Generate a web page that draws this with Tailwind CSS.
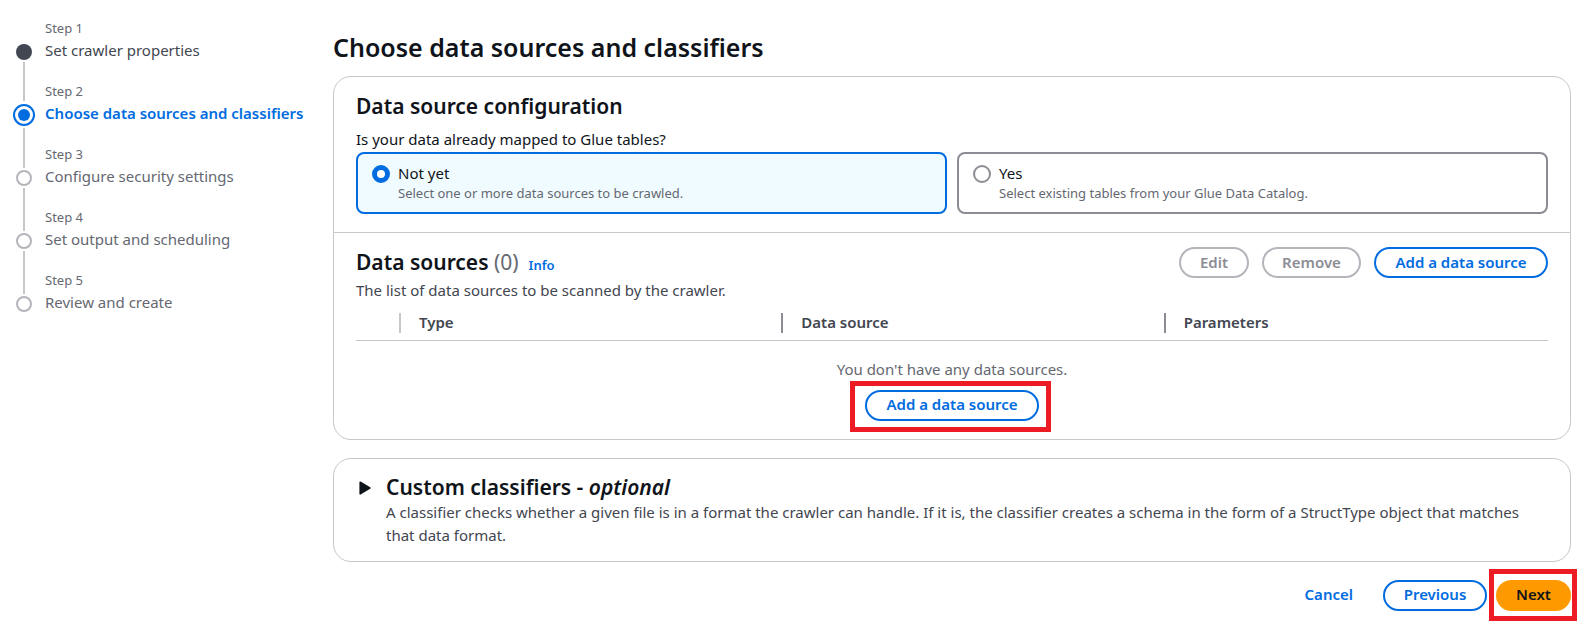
<!DOCTYPE html>
<html lang="en">
<head>
<meta charset="utf-8">
<meta name="viewport" content="width=device-width, initial-scale=1">
<title>Choose data sources and classifiers</title>
<script src="https://cdn.jsdelivr.net/npm/@tailwindcss/browser@4"></script>
</head>
<body class="flex bg-white font-['Noto_Sans','Open_Sans',sans-serif] text-[15px] leading-[22px] text-[#0f141a]">
  <nav aria-label="Steps" class="w-[333px] shrink-0 pt-[17px] pl-[11px]">
    <ol>
      <li class="flex h-[63px] gap-2">
        <span class="flex w-[26px] shrink-0 flex-col items-center pt-[27px]">
          <span class="size-4 shrink-0 rounded-full bg-[#424650]"></span>
          <span class="mt-[2px] h-[39px] w-[2px] shrink-0 bg-[#c6c6cd]"></span>
        </span>
        <span class="flex flex-col"><span class="text-[13px] text-[#656871]">Step 1</span><a href="#" class="text-[#424650]">Set crawler properties</a></span>
      </li>
      <li class="flex h-[63px] gap-2">
        <span class="flex w-[26px] shrink-0 flex-col items-center pt-[24px]">
          <span class="flex size-[22px] shrink-0 items-center justify-center rounded-full border-2 border-[#006ce0]"><span class="size-3 rounded-full bg-[#006ce0]"></span></span>
          <span class="mt-[2px] h-[40px] w-[2px] shrink-0 bg-[#c6c6cd]"></span>
        </span>
        <span class="flex flex-col whitespace-nowrap"><span class="text-[13px] text-[#656871]">Step 2</span><span aria-current="step" class="font-semibold text-[#006ce0]">Choose data sources and classifiers</span></span>
      </li>
      <li class="flex h-[63px] gap-2">
        <span class="flex w-[26px] shrink-0 flex-col items-center pt-[27px]">
          <span class="size-4 shrink-0 rounded-full border-2 border-[#b4b4bb]"></span>
          <span class="mt-[2px] h-[43px] w-[2px] shrink-0 bg-[#c6c6cd]"></span>
        </span>
        <span class="flex flex-col text-[#656871]"><span class="text-[13px]">Step 3</span><span>Configure security settings</span></span>
      </li>
      <li class="flex h-[63px] gap-2">
        <span class="flex w-[26px] shrink-0 flex-col items-center pt-[27px]">
          <span class="size-4 shrink-0 rounded-full border-2 border-[#b4b4bb]"></span>
          <span class="mt-[2px] h-[43px] w-[2px] shrink-0 bg-[#c6c6cd]"></span>
        </span>
        <span class="flex flex-col text-[#656871]"><span class="text-[13px]">Step 4</span><span>Set output and scheduling</span></span>
      </li>
      <li class="flex h-[63px] gap-2">
        <span class="flex w-[26px] shrink-0 flex-col items-center pt-[27px]">
          <span class="size-4 shrink-0 rounded-full border-2 border-[#b4b4bb]"></span>
        </span>
        <span class="flex flex-col text-[#656871]"><span class="text-[13px]">Step 5</span><span>Review and create</span></span>
      </li>
    </ol>
  </nav>

  <main class="min-w-0 grow pt-[31px] pr-[7px] pb-[14px]">
    <h1 class="text-[25px] leading-[32px] font-semibold">Choose data sources and classifiers</h1>

    <section class="mt-[13px] rounded-[18px] border border-[#c6c6cd]">
      <div class="border-b border-[#c6c6cd] px-[22px] pt-4 pb-[18px]">
        <h2 class="text-[21px] leading-[26px] font-semibold">Data source configuration</h2>
        <fieldset class="mt-[9px]">
          <legend>Is your data already mapped to Glue tables?</legend>
          <div class="mt-[2px] grid grid-cols-2 gap-[10px]">
            <label class="flex gap-2 rounded-lg border-2 border-[#006ce0] bg-[#f0fbff] px-[14px] pt-2 pb-[10px]">
              <input type="radio" name="mapped" checked class="mt-[3px] size-[18px] shrink-0 appearance-none rounded-full border-[#8c8c94] bg-white not-checked:border-2 checked:border-[5px] checked:border-[#006ce0]">
              <span class="flex flex-col"><span>Not yet</span><span class="text-[13px] leading-[18px] text-[#656871]">Select one or more data sources to be crawled.</span></span>
            </label>
            <label class="flex gap-2 rounded-lg border-2 border-[#8c8c94] bg-white px-[14px] pt-2 pb-[10px]">
              <input type="radio" name="mapped" class="mt-[3px] size-[18px] shrink-0 appearance-none rounded-full border-[#8c8c94] bg-white not-checked:border-2 checked:border-[5px] checked:border-[#006ce0]">
              <span class="flex flex-col"><span>Yes</span><span class="text-[13px] leading-[18px] text-[#656871]">Select existing tables from your Glue Data Catalog.</span></span>
            </label>
          </div>
        </fieldset>
      </div>

      <div class="px-[22px] pt-[14px] pb-[18px]">
        <div class="flex items-start justify-between">
          <div>
            <div class="flex h-8 items-baseline gap-[10px]">
              <h2 class="text-[21px] leading-[30px] font-semibold">Data sources <span class="font-normal text-[#656871]">(0)</span></h2>
              <a href="#" class="text-[13px] font-semibold text-[#006ce0]">Info</a>
            </div>
            <p class="text-[#424650]">The list of data sources to be scanned by the crawler.</p>
          </div>
          <div class="flex gap-[13px] font-semibold">
            <button type="button" disabled class="flex h-[31px] w-[70px] items-center justify-center rounded-full border-2 border-[#b4b4bb] pb-[2px] text-[#8c8c94]">Edit</button>
            <button type="button" disabled class="flex h-[31px] w-[99px] items-center justify-center rounded-full border-2 border-[#b4b4bb] pb-[2px] text-[#8c8c94]">Remove</button>
            <button type="button" class="flex h-[31px] w-[174px] items-center justify-center rounded-full border-2 border-[#006ce0] pb-[2px] text-[#006ce0]">Add a data source</button>
          </div>
        </div>
        <table class="w-full table-fixed">
          <thead>
            <tr class="h-[39px] border-b border-[#c6c6cd] text-left text-[#424650]">
              <th class="w-[45px] p-0 pt-[6px]" aria-label="Selection"><div class="h-5 border-r-2 border-[#c6c6cd]"></div></th>
              <th class="p-0 pt-[6px] font-semibold"><div class="h-5 border-r-2 border-[#8c8c94] pl-[18px] leading-[18px]">Type</div></th>
              <th class="p-0 pt-[6px] font-semibold"><div class="h-5 border-r-2 border-[#8c8c94] pl-[18px] leading-[18px]">Data source</div></th>
              <th class="p-0 pt-[6px] font-semibold"><div class="h-5 pl-[18px] leading-[18px]">Parameters</div></th>
            </tr>
          </thead>
          <tbody>
            <tr>
              <td colspan="4" class="p-0 pt-[17px] text-center text-[#656871]">
                <p>You don't have any data sources.</p>
                <div class="relative mx-auto mt-[10px] w-[174px]">
                  <button type="button" class="flex h-[31px] w-full items-center justify-center rounded-full border-2 border-[#006ce0] pb-[2px] font-semibold text-[#006ce0]">Add a data source</button>
                  <span class="pointer-events-none absolute -top-[9px] -right-3 -bottom-[11px] -left-[15px] border-5 border-[#ed1c24]"></span>
                </div>
              </td>
            </tr>
          </tbody>
        </table>
      </div>
    </section>

    <section class="mt-[18px] flex rounded-[18px] border border-[#c6c6cd] pt-[15px] pr-[22px] pb-[14px] pl-[25px]">
      <button type="button" aria-label="Expand custom classifiers" class="mt-[7px] mr-[15px] h-[14px] w-3 shrink-0">
        <svg viewBox="0 0 12 14" class="h-[14px] w-3" fill="#0f141a" stroke="#0f141a" stroke-width="1.6" stroke-linejoin="round"><path d="M1.2 1.2 10.8 7 1.2 12.8Z"/></svg>
      </button>
      <div>
        <h2 class="text-[21px] leading-[26px] font-semibold">Custom classifiers - <i>optional</i></h2>
        <p class="mt-px leading-[23px] text-[#424650]">A classifier checks whether a given file is in a format the crawler can handle. If it is, the classifier creates a schema in the form of a StructType object that matches that data format.</p>
      </div>
    </section>

    <div class="mt-[18px] flex items-center justify-end font-semibold">
      <button type="button" class="mr-[30px] pb-[2px] text-[#006ce0]">Cancel</button>
      <button type="button" class="mr-[9px] flex h-[31px] w-[104px] items-center justify-center rounded-full border-2 border-[#006ce0] pb-[2px] text-[#006ce0]">Previous</button>
      <div class="relative w-[75px]">
        <button type="button" class="flex h-[31px] w-full items-center justify-center rounded-full bg-[#ff9900] pb-[2px]">Next</button>
        <span class="pointer-events-none absolute -top-[11px] -right-[6px] -bottom-[10px] -left-[7px] border-5 border-[#ed1c24]"></span>
      </div>
    </div>
  </main>
</body>
</html>
